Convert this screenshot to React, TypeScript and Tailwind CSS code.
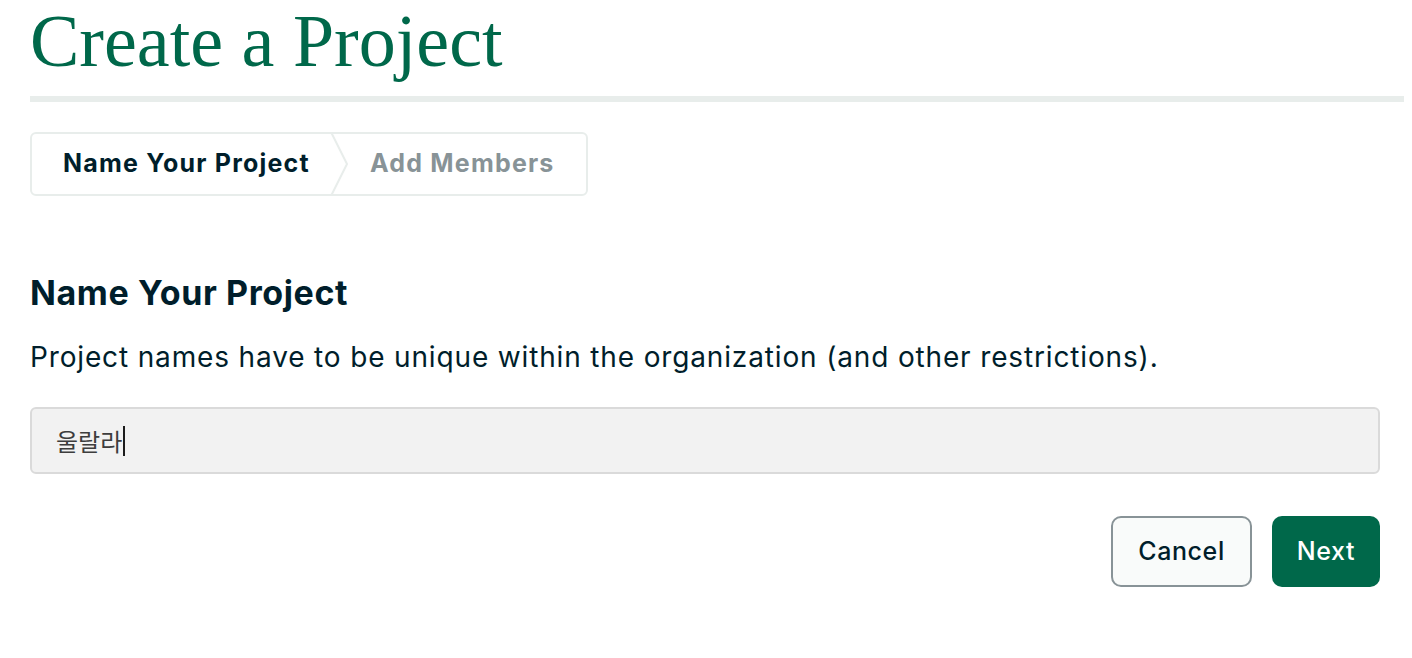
export default function App() {
  return (
    <div className="min-h-screen bg-white pl-[30px] pr-[8px]" style={{ fontFamily: 'Inter, "Noto Sans", sans-serif' }}>
      <h1 className="text-[74px] leading-[82px] text-[#00684A]" style={{ fontFamily: '"Liberation Serif", serif' }}>
        Create a Project
      </h1>
      <div className="mt-[14px] h-[6px] bg-[#E8EDEB]" />

      <div className="mt-[30px] flex h-[64px] w-[558px] rounded-[6px] border-2 border-[#E8EDEB]">
        <div className="relative flex w-[300px] items-center pl-[31px] text-[25px] font-bold tracking-[1.2px] text-[#001E2B]">
          Name Your Project
          <svg className="absolute right-[-18px] top-[-2px]" width="20" height="64" viewBox="0 0 20 64">
            <path d="M1 0 L17 32 L1 64" fill="none" stroke="#E8EDEB" strokeWidth="2" />
          </svg>
        </div>
        <div className="flex items-center pl-[38px] text-[25px] font-bold tracking-[1.2px] text-[#889397]">Add Members</div>
      </div>

      <div className="pr-[24px]">
        <h2 className="mt-[76px] text-[34px] leading-[42px] font-bold tracking-[0.6px] text-[#001E2B]">Name Your Project</h2>
        <p className="mt-[26px] text-[28px] leading-[34px] tracking-[0.85px] text-[#001E2B]">
          Project names have to be unique within the organization (and other restrictions).
        </p>

        <div className="mt-[33px] flex h-[67px] items-center rounded-[6px] border-2 border-[#DADADA] bg-[#F2F2F2] px-[24px]">
          <span className="text-[24px] text-[#3D3D3D]" style={{ fontFamily: '"Noto Sans CJK KR", sans-serif' }}>울랄라</span>
          <span className="ml-[1px] h-[30px] w-[2px] bg-[#1C1C1C]" />
        </div>

        <div className="mt-[42px] flex justify-end gap-[20px]">
          <button className="h-[71px] w-[141px] rounded-[10px] border-2 border-[#889397] bg-[#F9FBFA] text-[25px] font-medium tracking-[0.6px] text-[#001E2B]">
            Cancel
          </button>
          <button className="h-[71px] w-[108px] rounded-[10px] bg-[#00684A] text-[25px] font-medium tracking-[0.6px] text-white">
            Next
          </button>
        </div>
      </div>
    </div>
  )
}
